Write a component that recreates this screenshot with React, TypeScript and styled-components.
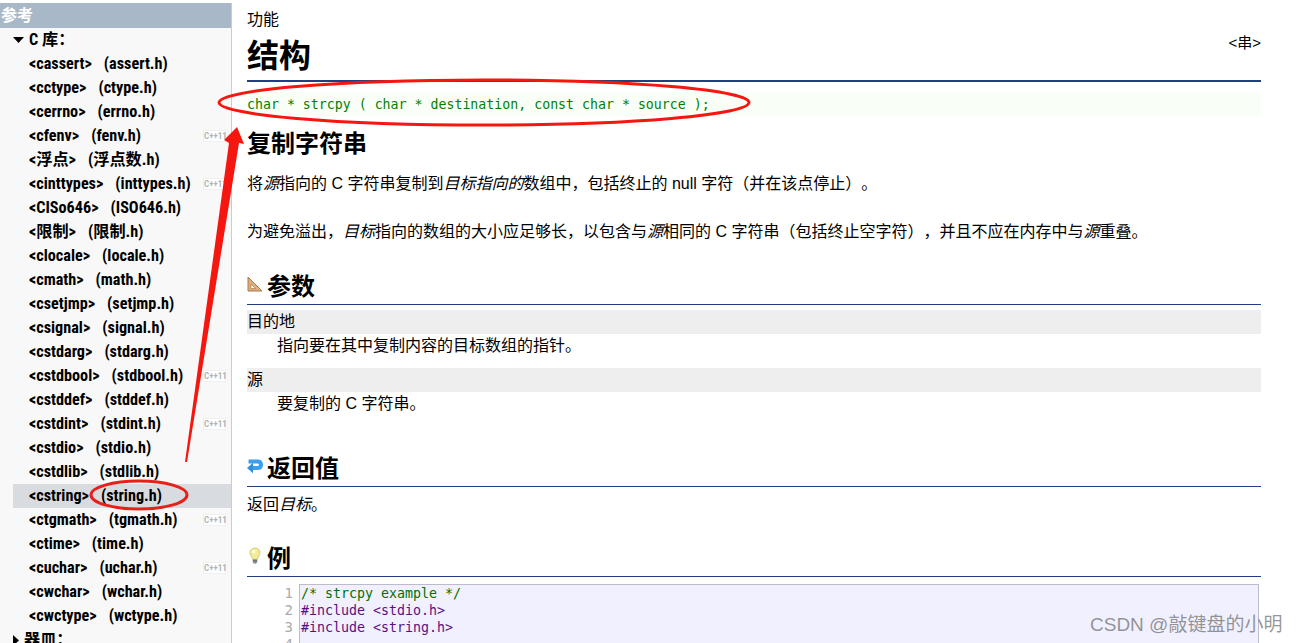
import React from "react";
import styled, { createGlobalStyle } from "styled-components";

const Global = createGlobalStyle`
  html, body { margin: 0; padding: 0; background: #fff; height: 643px; overflow: hidden; }
  #root { height: 643px; }
`;

const CJK = `"Liberation Sans", "Noto Sans CJK SC", sans-serif`;
const MONO = `"DejaVu Sans Mono", "Noto Sans CJK SC", monospace`;

const Page = styled.div`
  position: relative;
  display: flex;
  width: 1296px;
  height: 643px;
  overflow: hidden;
  font-family: ${CJK};
  color: #000;
  text-spacing-trim: space-all;
`;

const Sidebar = styled.aside`
  flex: none;
  width: 232px;
  margin-top: 3px;
  background: #f8f8f8;
  border-right: 1px solid #ccc;
  box-sizing: border-box;
`;

const SideHeader = styled.div`
  height: 25px;
  line-height: 25px;
  background: #a8b8c8;
  color: #fff;
  font-weight: bold;
  font-size: 16px;
  padding-left: 1px;
`;

const Group = styled.div<{ $indent: number }>`
  display: flex;
  align-items: center;
  height: 24px;
  box-sizing: border-box;
  padding: 0 0 0 13px;
  gap: ${(p) => p.$indent}px;
  font: bold 16.2px/22px "Roboto", "Noto Sans CJK SC", sans-serif;
  font-stretch: 75%;
`;

const Tri = styled.svg`
  flex: none;
  display: block;
`;

const Item = styled.div<{ $active?: boolean }>`
  display: flex;
  align-items: center;
  height: 24px;
  box-sizing: border-box;
  margin-left: 13px;
  padding: 0 6px 0 16px;
  background: ${(p) => (p.$active ? "#d8dbe0" : "transparent")};
  font: bold 16.2px/22px "Roboto", "Noto Sans CJK SC", sans-serif;
  font-stretch: 75%;
  white-space: nowrap;
`;

const Label = styled.span`
  display: block;
  height: 22px;
`;

const HeaderName = styled(Label)`
  margin-left: 12px;
`;

const Badge = styled.span`
  margin-left: auto;
  margin-right: -1px;
  width: 21px;
  height: 10px;
  text-align: center;
  font: bold 9px/10px "Roboto", sans-serif;
  font-stretch: 75%;
  color: #b4b4b4;
  background: #fff;
  border: 1px solid #f0f0f0;
`;

const Main = styled.main`
  flex: 1;
  min-width: 0;
  padding: 10px 35px 0 15px;
  font-size: 16px;
`;

const Crumb = styled.div`
  height: 20px;
  line-height: 20px;
`;

const TitleRow = styled.div`
  display: flex;
  justify-content: space-between;
  align-items: flex-start;
  height: 52px;
  box-sizing: border-box;
  border-bottom: 2px solid #1f3f7f;
`;

const Title = styled.h1`
  margin: 0;
  font-size: 32px;
  line-height: 52px;
  font-weight: bold;
`;

const TitleNote = styled.span`
  font-size: 15px;
  line-height: 26px;
`;

const Proto = styled.div`
  margin-top: 10px;
  height: 24px;
  background: #f9fff7;
  color: #008000;
  font: 13.25px/26px ${MONO};
  white-space: pre;
`;

const Sub = styled.h2`
  margin: 12px 0 0;
  height: 32px;
  font-size: 24px;
  line-height: 32px;
  font-weight: bold;
`;

const Para = styled.p<{ $top: number }>`
  margin: ${(p) => p.$top}px 0 0;
  height: 24px;
  line-height: 24px;
  white-space: nowrap;
`;

const SectionHead = styled.div<{ $top: number }>`
  display: flex;
  align-items: center;
  gap: 4px;
  margin-top: ${(p) => p.$top}px;
  height: 32px;
  box-sizing: border-box;
  padding-bottom: 9px;
  border-bottom: 1px solid #1f3f7f;
  font-size: 24px;
  font-weight: bold;
`;

const Term = styled.div<{ $top: number }>`
  margin-top: ${(p) => p.$top}px;
  height: 24px;
  line-height: 24px;
  background: #eee;
`;

const Def = styled.div`
  height: 24px;
  line-height: 24px;
  padding-left: 30px;
`;

const CodeWrap = styled.div`
  display: flex;
  margin-top: 7px;
  margin-right: 2px;
  font: 13.3px/17px ${MONO};
`;

const Gutter = styled.div`
  flex: none;
  width: 52px;
  padding-right: 6px;
  padding-top: 1px;
  box-sizing: border-box;
  text-align: right;
  color: #aaa;
  font-size: 14px;
`;

const CodeBox = styled.pre`
  flex: 1;
  margin: 0;
  height: 70px;
  background: #f0f0ff;
  border: 1px solid #bbc;
  border-bottom: 0;
  font: inherit;
  padding: 0 0 0 1px;
`;

const Comment = styled.span`
  color: #007000;
`;

const Prep = styled.span`
  color: #5c0f80;
`;

const Watermark = styled.div`
  position: absolute;
  left: 1090px;
  top: 613px;
  font: 19px/24px "Liberation Sans", "Noto Sans CJK SC", sans-serif;
  color: rgba(110, 110, 110, 0.72);
  white-space: nowrap;
`;

const Marks = styled.svg`
  position: absolute;
  left: 0;
  top: 0;
  pointer-events: none;
`;

type H = [string, string, boolean?];
const headers: H[] = [
  ["cassert", "assert.h"],
  ["cctype", "ctype.h"],
  ["cerrno", "errno.h"],
  ["cfenv", "fenv.h", true],
  ["浮点", "浮点数.h"],
  ["cinttypes", "inttypes.h", true],
  ["CISo646", "ISO646.h"],
  ["限制", "限制.h"],
  ["clocale", "locale.h"],
  ["cmath", "math.h"],
  ["csetjmp", "setjmp.h"],
  ["csignal", "signal.h"],
  ["cstdarg", "stdarg.h"],
  ["cstdbool", "stdbool.h", true],
  ["cstddef", "stddef.h"],
  ["cstdint", "stdint.h", true],
  ["cstdio", "stdio.h"],
  ["cstdlib", "stdlib.h"],
  ["cstring", "string.h"],
  ["ctgmath", "tgmath.h", true],
  ["ctime", "time.h"],
  ["cuchar", "uchar.h", true],
  ["cwchar", "wchar.h"],
  ["cwctype", "wctype.h"],
];

const Ruler = () => (
  <svg width="16" height="16" viewBox="0 0 16 16">
    <path d="M1 1 L15 15 H1 Z" fill="#dfae7c" stroke="#a8794a" strokeWidth="1" />
    <path d="M4 8 L8.5 12.6 H4 Z" fill="#fff" stroke="#a8794a" strokeWidth="0.7" />
  </svg>
);

const ReturnArrow = () => (
  <svg width="16" height="16" viewBox="0 0 16 16">
    <path d="M1.5 3.5 H10.5 Q14 3.5 14 6.8 Q14 10 10.5 10 H5" fill="none" stroke="#3aa0ec" strokeWidth="4" />
    <path d="M0 10 L6 4.8 V15.2 Z" fill="#2f8fe0" />
  </svg>
);

const Bulb = () => (
  <svg width="16" height="18" viewBox="0 0 16 18">
    <path d="M8 1 C4.5 1 3 3.4 3 5.8 C3 8.5 5.4 9.8 5.6 12.5 H10.4 C10.6 9.8 13 8.5 13 5.8 C13 3.4 11.5 1 8 1 Z" fill="#f2ec9a" stroke="#c9bf6a" strokeWidth="0.8" />
    <ellipse cx="6.8" cy="4.6" rx="1.6" ry="2" fill="#fffde0" />
    <rect x="5.8" y="12.6" width="4.4" height="3.2" rx="0.6" fill="#777" />
    <rect x="6.8" y="15.8" width="2.4" height="1.2" fill="#aaa" />
  </svg>
);

export default function App() {
  return (
    <Page>
      <Global />
      <Sidebar>
        <SideHeader>参考</SideHeader>
        <Group $indent={5}>
          <Tri width="11" height="6" viewBox="0 0 11 6">
            <path d="M0 0 H11 L5.5 6 Z" fill="#000" />
          </Tri>
          <span>C 库&#xFF1A;</span>
        </Group>
        {headers.map(([a, b, badge]) => (
          <Item key={a} $active={a === "cstring"}>
            <Label>&lt;{a}&gt;</Label>
            <HeaderName>({b})</HeaderName>
            {badge && <Badge>C++11</Badge>}
          </Item>
        ))}
        <Group $indent={5}>
          <Tri width="6" height="11" viewBox="0 0 6 11">
            <path d="M0 0 V11 L6 5.5 Z" fill="#000" />
          </Tri>
          <span>器皿&#xFF1A;</span>
        </Group>
      </Sidebar>
      <Main>
        <Crumb>功能</Crumb>
        <TitleRow>
          <Title>结构</Title>
          <TitleNote>&lt;串&gt;</TitleNote>
        </TitleRow>
        <Proto>char * strcpy ( char * destination, const char * source );</Proto>
        <Sub>复制字符串</Sub>
        <Para $top={12}>
          将<em>源</em>指向的 C 字符串复制到<em>目标指向的</em>数组中&#xFF0C;包括终止的 null 字符&#xFF08;并在该点停止&#xFF09;。
        </Para>
        <Para $top={24}>
          为避免溢出&#xFF0C;<em>目标</em>指向的数组的大小应足够长&#xFF0C;以包含与<em>源</em>相同的 C 字符串&#xFF08;包括终止空字符&#xFF09;&#xFF0C;并且不应在内存中与<em>源</em>重叠。
        </Para>
        <SectionHead $top={29}>
          <Ruler />
          参数
        </SectionHead>
        <Term $top={5}>目的地</Term>
        <Def>指向要在其中复制内容的目标数组的指针。</Def>
        <Term $top={10}>源</Term>
        <Def>要复制的 C 字符串。</Def>
        <SectionHead $top={39}>
          <ReturnArrow />
          返回值
        </SectionHead>
        <Para $top={6}>
          返回<em>目标</em>。
        </Para>
        <SectionHead $top={28}>
          <Bulb />
          例
        </SectionHead>
        <CodeWrap>
          <Gutter>
            1<br />2<br />3<br />4
          </Gutter>
          <CodeBox>
            <Comment>/* strcpy example */</Comment>
            {"\n"}
            <Prep>#include &lt;stdio.h&gt;</Prep>
            {"\n"}
            <Prep>#include &lt;string.h&gt;</Prep>
          </CodeBox>
        </CodeWrap>
      </Main>
      <Watermark>CSDN @敲键盘的小明</Watermark>
      <Marks width="1296" height="643" viewBox="0 0 1296 643" fill="none">
        <ellipse cx="484" cy="102.5" rx="265" ry="22.5" stroke="#f5160f" strokeWidth="3" />
        <ellipse cx="139" cy="495" rx="48" ry="14" stroke="#e8201a" strokeWidth="3" />
        <path d="M185 462 L229 143 L224 140 L237 127 L244 144 L239 143 L187 462 Z" fill="#f5160f" />
      </Marks>
    </Page>
  );
}
